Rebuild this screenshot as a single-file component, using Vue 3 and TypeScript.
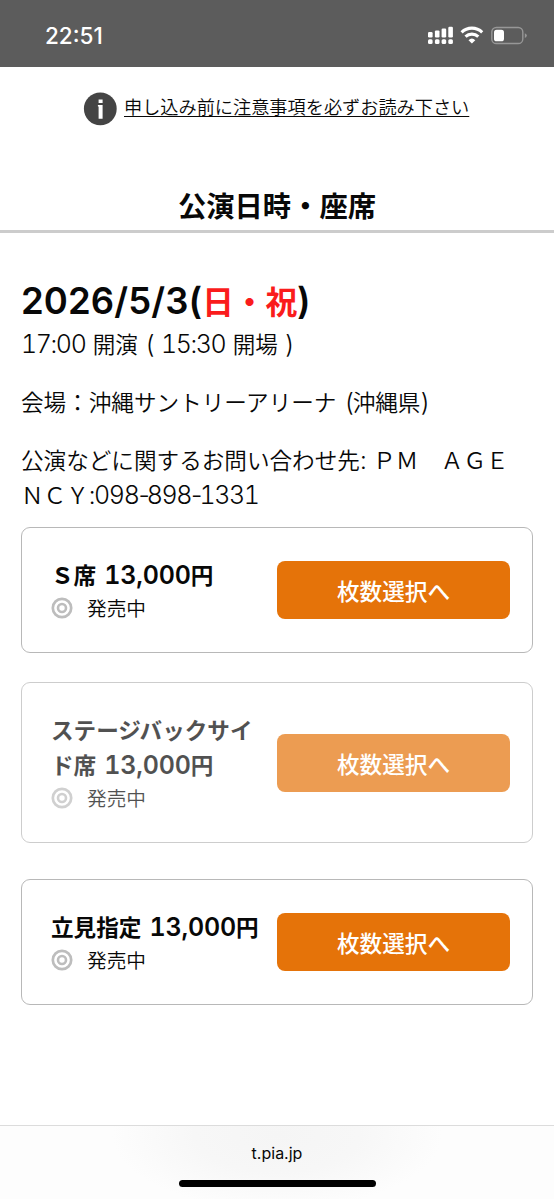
<script setup lang="ts">
interface Seat {
  id: string
  lines: { name: string; price?: string; unit?: string }[]
  pressed?: boolean
}

const seats: Seat[] = [
  { id: 's', lines: [{ name: 'Ｓ席', price: '13,000', unit: '円' }] },
  {
    id: 'back',
    lines: [{ name: 'ステージバックサイ' }, { name: 'ド席', price: '13,000', unit: '円' }],
    pressed: true,
  },
  { id: 'stand', lines: [{ name: '立見指定', price: '13,000', unit: '円' }] },
]
</script>

<template>
  <div class="screen">
    <header class="status">
      <span class="clock">22:51</span>
      <svg class="indicators" width="102" height="20" viewBox="0 0 102 20">
        <g fill="#fff">
          <rect x="1" y="6" width="4.6" height="5.4" rx="1.2" />
          <rect x="7.9" y="4.4" width="4.6" height="7" rx="1.2" />
          <rect x="14.6" y="2.5" width="4.6" height="8.9" rx="1.2" />
          <rect x="21.3" y="0.7" width="4.6" height="10.7" rx="1.2" />
          <rect x="1" y="13.3" width="4.6" height="4.7" rx="1.5" />
          <rect x="7.9" y="13.3" width="4.6" height="4.7" rx="1.5" />
          <rect x="14.6" y="13.3" width="4.6" height="4.7" rx="1.5" />
          <rect x="21.3" y="13.3" width="4.6" height="4.7" rx="1.5" />
          <path d="M41.5 14.2a5 5 0 0 1 6.8 0L44.9 17.6Z" />
        </g>
        <g fill="none" stroke="#fff" stroke-width="3.1">
          <path d="M34.6 6.3a14.8 14.8 0 0 1 20.6 0" />
          <path d="M38.5 10.7a9.3 9.3 0 0 1 12.8 0" />
        </g>
        <rect x="64.8" y="1.5" width="31" height="16" rx="4.6" fill="none" stroke="#979797" stroke-width="1.4" />
        <rect x="67" y="3.7" width="10" height="11.6" rx="2.6" fill="#fff" />
        <path d="M97.8 7.2q2 .6 2 2.4t-2 2.4Z" fill="#979797" />
      </svg>
    </header>

    <main>
      <div class="notice">
        <svg width="34" height="34" viewBox="0 0 34 34">
          <circle cx="17.3" cy="16.8" r="16.4" fill="#444" />
          <path fill="#fff" d="M15.6 7.5h4v3.5h-4zM14.9 13h4.7v13.8h-4V14.4h-.7z" />
        </svg>
        <a>申し込み前に注意事項を必ずお読み下さい</a>
      </div>

      <h1>公演日時・座席</h1>

      <section class="event">
        <h2><span class="dn">2026/5/3(</span><em>日・祝</em><span class="dn">)</span></h2>
        <p class="time"><span class="n">17:00</span>&nbsp;開演&nbsp;<span class="n">( 15:30</span>&nbsp;開場&nbsp;<span class="n">)</span></p>
        <p class="venue">会場：沖縄サントリーアリーナ <span class="n">(</span>沖縄県<span class="n">)</span></p>
        <p class="contact">公演などに関するお問い合わせ先<span class="n">:</span> ＰＭ　ＡＧＥ<br />ＮＣＹ<span class="n">:098<span class="dash">-</span>898<span class="dash">-</span>1331</span></p>
      </section>

      <section class="seats">
        <article v-for="seat in seats" :key="seat.id" class="card" :class="[seat.id, { pressed: seat.pressed }]">
          <div class="info">
            <h3>
              <span v-for="line in seat.lines" :key="line.name" class="line">{{ line.name }}<template v-if="line.price">&nbsp;<span class="bn">{{ line.price }}</span>{{ line.unit }}</template></span>
            </h3>
            <div class="sale">
              <svg width="22" height="22" viewBox="0 0 22 22" fill="none" stroke="#bdbdbd">
                <circle cx="11" cy="11" r="9.2" stroke-width="2.7" />
                <circle cx="11" cy="11" r="4" stroke-width="2.6" />
              </svg>
              <span>発売中</span>
            </div>
          </div>
          <button type="button">枚数選択へ</button>
        </article>
      </section>
    </main>

    <footer>
      <span class="url">t.pia.jp</span>
      <span class="home"></span>
    </footer>
  </div>
</template>

<style>
body {
  margin: 0;
  background: #fff;
}
</style>

<style scoped>
.screen {
  display: flex;
  flex-direction: column;
  width: 554px;
  height: 1199px;
  overflow: hidden;
  background: #fff;
  color: #080808;
  font-family: "Noto Sans CJK JP", sans-serif;
  font-size: 22.6px;
}
.status {
  display: flex;
  box-sizing: border-box;
  height: 67px;
  flex: none;
  justify-content: space-between;
  align-items: flex-start;
  padding: 23px 25px 0 45px;
  background: #5c5c5c;
}
.clock {
  font: 500 22.5px/26px Inter, sans-serif;
  letter-spacing: 0;
  color: #fff;
}
.indicators {
  margin-top: 3px;
}
main {
  flex: 1;
}
.notice {
  display: flex;
  height: 34px;
  margin: 25px 0 0 83px;
  gap: 7px;
}
.notice svg {
  flex: none;
}
.notice a {
  font-size: 18.18px;
  font-weight: 350;
  line-height: 28px;
  text-decoration: underline;
  text-decoration-thickness: 1.4px;
  text-underline-offset: 2px;
  white-space: nowrap;
}
h1 {
  height: 44px;
  margin: 60px 0 0;
  border-bottom: 3px solid #ccc;
  font-size: 28.3px;
  font-weight: 600;
  line-height: 37px;
  text-align: center;
}
.event {
  padding: 46px 21px 0;
  white-space: nowrap;
}
h2 {
  height: 47px;
  margin: 0;
  font-size: 31.6px;
  font-weight: 600;
  line-height: 42px;
}
h2 em {
  font-style: normal;
  color: #fa1c1c;
}
.dn {
  font: 600 36.5px/30px Inter, sans-serif;
  letter-spacing: 0.1px;
}
.event p {
  margin: 0;
  font-weight: 350;
  line-height: 35px;
  word-spacing: 2.8px;
}
.event .time {
  word-spacing: 2.2px;
}
.n {
  font: 300 25px/30px Inter, sans-serif;
  font-feature-settings: "tnum";
  letter-spacing: -1.4px;
}
.dash {
  font-feature-settings: normal;
  letter-spacing: -3px;
}
.event .venue {
  margin-top: 23px;
}
.event .contact {
  margin-top: 23px;
}
.seats {
  padding: 15px 21px 0;
}
.card {
  display: flex;
  box-sizing: border-box;
  height: 126px;
  padding: 0 21px 0 29px;
  align-items: center;
  justify-content: space-between;
  border: 1.5px solid #b8b8b8;
  border-radius: 9px;
}
.card.back {
  height: 161px;
  margin: 29px 0 36px;
}
.pressed {
  opacity: 0.7;
}
h3 {
  margin: 0;
  font-size: 22.6px;
  font-weight: 600;
  line-height: 34px;
  white-space: nowrap;
  word-spacing: 3px;
}
.line {
  display: block;
  height: 35px;
}
.bn {
  font: 600 25px/30px Inter, sans-serif;
  font-feature-settings: "tnum";
  letter-spacing: -0.2px;
}
.info {
  width: 225px;
}
.sale {
  display: flex;
  height: 30px;
  gap: 14px;
  align-items: center;
  font-size: 19.7px;
  font-weight: 350;
  line-height: 30px;
}
.card button {
  width: 233px;
  height: 58px;
  flex: none;
  margin-right: 1px;
  padding: 0;
  border: 0;
  border-radius: 8px;
  background: #e57309;
  color: #fff;
  font: 500 22.6px/59px "Noto Sans CJK JP", sans-serif;
}
footer {
  display: flex;
  box-sizing: border-box;
  height: 74px;
  flex: none;
  flex-direction: column;
  align-items: center;
  border-top: 1px solid #dcdcdc;
  background: radial-gradient(ellipse 165px 75px at 50% 12%, #f5f5f5 0%, #f7f7f7 50%, #fdfdfd 100%);
}
.url {
  margin-top: 16px;
  font: 400 16px/22px Inter, sans-serif;
}
.home {
  width: 197px;
  height: 7px;
  margin-top: 16px;
  border-radius: 4px;
  background: #000;
}
</style>
